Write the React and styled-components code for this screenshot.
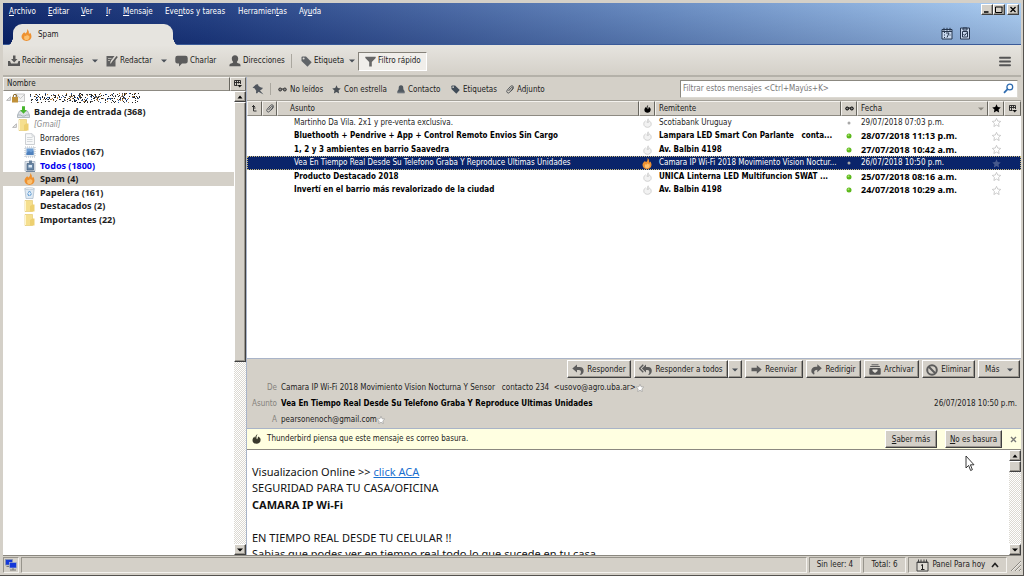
import React from "react";
import styled, { createGlobalStyle, css } from "styled-components";

const ui = '"DejaVu Sans Condensed", "DejaVu Sans", sans-serif';
const uiBold = '"Noto Sans", "DejaVu Sans", sans-serif';
const face = "#d4d0c8";
const navy = "#0a246a";

const Global = createGlobalStyle`
  *, *::before, *::after { box-sizing: border-box; }
  body { margin: 0; background: ${face}; font: 8px/12px ${ui}; color: #1c1c1c; }
  button, input { font: inherit; color: inherit; margin: 0; padding: 0; border: 0; background: none; }
  svg { display: block; flex: none; }
  u { text-underline-offset: 1px; }
`;

const raised = css`
  background: ${face};
  border: 1px solid;
  border-color: #fff #404040 #404040 #fff;
  box-shadow: inset -1px -1px 0 #9a968e;
`;

/* ---------- window frame ---------- */
const Window = styled.div`
  height: 100vh;
  min-height: 400px;
  display: flex;
  flex-direction: column;
  padding: 3px 2px 1px 3px;
  background: ${face};
  border-right: 1px solid #55534f;
  border-bottom: 1px solid #55534f;
`;

const TitleArea = styled.header`
  height: 42px;
  flex: none;
  display: grid;
  grid-template-columns: 1fr auto;
  grid-template-rows: 20px 22px;
  padding-left: 6px;
  background:
    linear-gradient(to bottom, rgba(255,255,255,.06), rgba(0,0,40,.14)),
    linear-gradient(to right, #0a246a 0%, #1c3a80 20%, #3c5c9c 40%, #6388c0 65%, #88addc 85%, #a8ccf2 100%);
  border-bottom: 1px solid #3a5a98;
`;

const MenuBar = styled.nav`
  display: flex;
  align-items: center;
  gap: 12px;
  padding-bottom: 2px;
  color: #fff;
`;
const MenuItem = styled.button`
  color: #fff;
  white-space: nowrap;
  width: ${(p) => p.$w}px;
  text-align: left;
`;

const WindowButtons = styled.div`
  display: flex;
  align-items: flex-start;
  justify-content: flex-end;
  padding: 1px 2px 0 0;
`;
const WindowButton = styled.button`
  ${raised}
  width: 12px;
  height: 11px;
  display: grid;
  place-items: center;
  color: #000;
  & + &:last-child { margin-left: 2px; }
`;

const TabStrip = styled.div`
  display: flex;
  align-items: flex-end;
  padding-left: 4px;
`;
const Tab = styled.button`
  position: relative;
  width: 160px;
  height: 22px;
  display: flex;
  align-items: center;
  gap: 6px;
  padding-left: 8px;
  margin-bottom: -1px;
  border-radius: 9px 9px 0 0;
  background: #e6e4df;
  &::before, &::after {
    content: "";
    position: absolute;
    bottom: 0;
    width: 7px;
    height: 9px;
  }
  &::before { right: 100%; background: radial-gradient(ellipse 7px 9px at 0 0, transparent 96%, #e6e4df 100%); }
  &::after { left: 100%; background: radial-gradient(ellipse 7px 9px at 100% 0, transparent 96%, #e6e4df 100%); }
`;
const TabTools = styled.div`
  display: flex;
  align-items: center;
  gap: 6px;
  padding: 0 50px 2px 0;
`;
const IconButton = styled.button`
  display: grid;
  place-items: center;
`;

/* ---------- main toolbar ---------- */
const Toolbar = styled.div`
  height: 32px;
  flex: none;
  display: flex;
  align-items: center;
  padding: 2px 10px 0 5px;
  background: linear-gradient(#e6e4df, #d4d0c8);
  border-bottom: 2px solid #b4b1a9;
`;
const ToolButton = styled.button`
  width: ${(p) => p.$w}px;
  height: 19px;
  display: flex;
  align-items: center;
  gap: 2px;
  white-space: nowrap;
  ${(p) => p.$pressed && css`
    padding-left: 6px;
    background: #f0eeea;
    border: 1px solid;
    border-color: #85827a #fff #fff #85827a;
  `}
`;
const ArrowButton = styled.button`
  width: ${(p) => p.$w || 22}px;
  height: 19px;
  display: grid;
  place-items: center;
`;
const Divider = styled.span`
  width: 1px;
  height: ${(p) => p.$h || 14}px;
  margin-right: ${(p) => p.$gap}px;
  background: #aaa79f;
`;
const Spacer = styled.span`flex: 1;`;

/* ---------- body split ---------- */
const Body = styled.div`
  flex: 1;
  min-height: 0;
  display: grid;
  grid-template-columns: 243px minmax(0, 1fr);
`;

const FolderPane = styled.aside`
  min-height: 0;
  display: grid;
  grid-template-columns: minmax(0, 1fr) 12px;
  grid-template-rows: 14px minmax(0, 1fr);
`;
const FolderHead = styled.div`
  grid-column: 1 / -1;
  display: flex;
`;
const HeadCell = styled.button`
  ${raised}
  border-color: #f4f2ee #68665f #8d8a82 #f4f2ee;
  box-shadow: none;
  height: 14px;
  flex: ${(p) => (p.$w ? "none" : 1)};
  width: ${(p) => (p.$w ? p.$w + "px" : "auto")};
  padding-left: ${(p) => (p.$w ? 0 : 3)}px;
  text-align: left;
  display: flex;
  align-items: center;
  justify-content: ${(p) => (p.$w ? "center" : "flex-start")};
`;
const Tree = styled.ul`
  margin: 0;
  padding: 0;
  list-style: none;
  background: #fff;
  display: grid;
  grid-auto-rows: 14px 13px;
  align-content: start;
  overflow: hidden;
`;
const Folder = styled.li`
  display: flex;
  align-items: center;
  padding-left: ${(p) => p.$indent}px;
  background: ${(p) => (p.$selected ? face : "none")};
`;
const FolderName = styled.span`
  padding-left: ${(p) => p.$pad || 4}px;
  white-space: nowrap;
  color: ${(p) => p.$color || "#1c1c1c"};
  font-style: ${(p) => (p.$italic ? "italic" : "normal")};
  ${(p) => p.$bold && css`font: bold 9px/12px ${uiBold};`}
`;
const Twisty = styled.span`
  width: 5px;
  margin-right: 1px;
`;

const ScrollTrack = styled.div`
  display: flex;
  flex-direction: column;
  background: repeating-conic-gradient(#fff 0 25%, #dcd9d2 0 50%) 0 0 / 2px 2px;
`;
const ScrollButton = styled.button`
  ${raised}
  flex: none;
  height: 11px;
  width: 12px;
  display: grid;
  place-items: center;
`;
const ScrollThumb = styled.div`
  ${raised}
  width: 12px;
  height: ${(p) => p.$h};
`;

/* ---------- right side ---------- */
const Main = styled.main`
  min-width: 0;
  min-height: 0;
  display: grid;
  grid-template-rows: minmax(0, 10fr) minmax(0, 7fr);
  border-left: 1px solid #a9b4c8;
`;
const ThreadPane = styled.section`
  display: flex;
  flex-direction: column;
  min-height: 0;
  background: #fff;
  overflow: hidden;
`;
const FilterBar = styled.div`
  height: 24px;
  flex: none;
  display: flex;
  align-items: center;
  padding: 0 3px 0 5px;
  background: ${face};
  border-bottom: 1px solid #a3a098;
`;
const FilterButton = styled.button`
  width: ${(p) => p.$w}px;
  height: 17px;
  padding-top: 2px;
  display: flex;
  align-items: center;
  gap: 3px;
  white-space: nowrap;
`;
const SearchBox = styled.label`
  width: 338px;
  height: 18px;
  display: flex;
  align-items: center;
  padding: 0 3px 0 2px;
  background: #fff;
  border: 1px solid;
  border-color: #8b8880 #dcd9d2 #dcd9d2 #8b8880;
`;
const SearchInput = styled.input`
  flex: 1;
  min-width: 0;
  outline: 0;
  &::placeholder { color: #777; opacity: 1; }
`;

const Threads = styled.table`
  width: 100%;
  table-layout: fixed;
  border-collapse: collapse;
  flex: none;
  th { padding: 0; font-weight: normal; background: ${face}; }
  td { padding: 0; height: 13px; line-height: 12px; overflow: hidden; white-space: pre; text-overflow: ellipsis; }
`;
const ThreadHead = styled.button`
  ${raised}
  border-color: #f4f2ee #68665f #8d8a82 #f4f2ee;
  box-shadow: none;
  width: 100%;
  height: 15px;
  display: flex;
  align-items: center;
  justify-content: ${(p) => (p.$center ? "center" : "space-between")};
  padding: 0 ${(p) => (p.$center ? 0 : 3)}px 0 ${(p) => p.$pad || 0}px;
`;
const ThreadRow = styled.tr`
  &:nth-child(even) td { height: 14px; }
  ${(p) => p.$bold && css`
    td { font-weight: bold; color: #000; }
    td.wide { font: bold 9px/12px ${uiBold}; }
  `}
  ${(p) => p.$selected && css`
    background: ${navy};
    outline: 1px dotted #c8b87a;
    outline-offset: -1px;
    color: #fff;
  `}
`;
const SubjectCell = styled.td`&& { padding-left: 17px; }`;
const TextCell = styled.td`&& { padding-left: 4px; }`;
const IconCell = styled.td`
  svg { margin: 0 auto; }
`;

/* ---------- message ---------- */
const MessagePane = styled.section`
  display: flex;
  flex-direction: column;
  min-height: 0;
  background: #fff;
  border-top: 1px solid #a9b4c8;
`;
const MessageHead = styled.div`
  flex: none;
  background: ${face};
  padding: 1px 1px 0 3px;
  border-bottom: 1px solid #a9b4c8;
`;
const Actions = styled.div`
  display: flex;
  justify-content: flex-end;
  gap: 3px;
`;
const ActionButton = styled.button`
  ${raised}
  width: ${(p) => p.$w}px;
  height: 18px;
  padding-top: 1px;
  display: flex;
  align-items: center;
  justify-content: center;
  gap: 3px;
  white-space: nowrap;
`;
const Split = styled.div`display: flex;`;
const Fields = styled.dl`
  margin: 2px 3px 0 0;
  display: grid;
  grid-template-columns: 27px minmax(0, 1fr) auto;
  column-gap: 4px;
  grid-template-rows: 16px 15px 17px;
  align-items: center;
  dt { text-align: right; color: #85827c; }
  dd { margin: 0; display: flex; align-items: center; white-space: pre; }
`;
const SubjectField = styled.dd`font-weight: bold; color: #000;`;
const JunkBar = styled.div`
  flex: none;
  height: 21px;
  display: flex;
  align-items: center;
  padding: 0 4px 0 5px;
  background: #ffffe1;
  border-bottom: 1px solid #8b8880;
`;
const JunkText = styled.span`
  flex: 1;
  padding-left: 6px;
`;
const JunkButton = styled(ActionButton)`margin-right: 8px;`;
const Content = styled.div`
  flex: 1;
  min-height: 0;
  display: grid;
  grid-template-columns: minmax(0, 1fr) 12px;
`;
const Article = styled.article`
  overflow: hidden;
  padding: 14px 0 0 5px;
  font-family: "Noto Sans", sans-serif;
  font-size: 11px;
  line-height: 16px;
  color: #111;
  display: grid;
  grid-auto-rows: 16px 17px;
  align-content: start;
  p { margin: 0; }
  a { color: #1a6fd0; }
`;

/* ---------- status bar ---------- */
const StatusBar = styled.footer`
  flex: none;
  height: 19px;
  display: flex;
  align-items: center;
  gap: 2px;
  border-top: 1px solid #8b8880;
  padding: 1px 0;
`;
const StatusCell = styled.div`
  height: 16px;
  width: ${(p) => (p.$w ? p.$w + "px" : "auto")};
  flex: ${(p) => (p.$w ? "none" : 1)};
  display: flex;
  align-items: center;
  justify-content: center;
  white-space: nowrap;
  border: 1px solid;
  border-color: #97948c #f4f2ee #f4f2ee #97948c;
`;
const StatusButton = styled.button`
  display: flex;
  align-items: center;
  gap: 3px;
`;
const Pointer = styled.svg`
  position: absolute;
  left: 965px;
  top: 455px;
  pointer-events: none;
`;

/* ---------- icons ---------- */
const Caret = ({ c = "#4a5058", up }) => (
  <svg width="6" height="4" viewBox="0 0 6 4"><path d={up ? "M0.5 3.5h5L3 .5z" : "M0 .5h6L3 3.5z"} fill={c} /></svg>
);
const Flame = ({ size = 11 }) => (
  <svg width={size} height={size + 1} viewBox="0 0 12 13">
    <path d="M6.500 0C7.200 2.200 6.500 3.400 5 4.800C4.600 4.600 4 4.200 3.600 3.400C1.500 5 .6 6.500.6 8.200C.6 11 3 13 6 13s5.400-2 5.400-4.800c0-1.700-.5-3-1.500-4.200C9.600 5 9.100 5.300 8.600 5.200C8.900 3 8.200 1.200 6.500 0z" fill="#ee9130" />
    <path d="M6.300 5.500C6.800 7.500 5 8.300 4.300 7C3 8.500 2.800 12 6 12s4-3.500 2.500-5C8 8 7 7 6.300 5.500z" fill="#fbc070" />
  </svg>
);
const JunkMark = ({ c = "#000", size = 9 }) => (
  <svg width={size} height={size + 1} viewBox="0 0 9 10">
    <path d="M5.500 0C5 1.500 4.400 2 4.500 4C4.500 5.500 5.500 5.500 5.600 4.300L6.200 2.500C8 3.500 8.700 4.600 8.600 6C8.500 8.500 6.700 9.800 4.500 9.800S.5 8.500.5 6.200C.5 4.500 1.500 3.600 2.500 2.500C2.500 3.700 3 4 3.300 3.200C3.600 2 4.200.7 5.500 0z" fill={c} />
  </svg>
);
const JunkOutline = () => (
  <svg width="9" height="10" viewBox="0 0 9 10">
    <path d="M5.200.8C4.600 2 4.200 3 4.300 5M2.500 2.800C1 4 .8 5 .8 6.200C.8 8 2.500 9.300 4.500 9.300S8.200 8 8.200 6.200C8.200 4.700 7.500 3.500 6 2.800M5.200.8V5" fill="#f2f2f2" stroke="#d0d0d0" />
  </svg>
);
const Star = ({ size = 9, fill = "#4a5056", stroke = "none" }) => (
  <svg width={size} height={size} viewBox="0 0 10 10">
    <path d="M5 .4L6.400 3.400L9.700 3.800L7.300 6.100L7.900 9.500L5 7.800L2.100 9.500L2.700 6.100L.3 3.800L3.600 3.400z" fill={fill} stroke={stroke} strokeWidth=".8" />
  </svg>
);
const Glasses = ({ c = "#333" }) => (
  <svg width="9" height="5" viewBox="0 0 9 5">
    <circle cx="2.200" cy="2.500" r="1.500" fill="#888" stroke={c} /><circle cx="6.800" cy="2.500" r="1.500" fill="#888" stroke={c} /><path d="M3.500 2h2" stroke={c} />
  </svg>
);
const Tag = ({ size = 11, c = "#606468" }) => (
  <svg width={size} height={size} viewBox="0 0 11 11">
    <path d="M.5 1.500Q.5.500 1.500.5H5L10.700 6.200L6.500 10.700L.5 5z" fill={c} /><circle cx="2.600" cy="2.600" r="1" fill="#e0ded8" />
  </svg>
);
const Clip = () => (
  <svg width="8" height="9" viewBox="0 0 8 9">
    <path d="M2.500 6L5.200 2.800Q6 2 6.500 2.600T6.300 4.200L3.600 7.400Q2.400 8.600 1.300 7.600T1.200 5.200L4.500 1.400Q5.800.2 7 1.200T7 3.800L5 6.200" fill="none" stroke="#45494e" strokeWidth=".9" />
  </svg>
);
const Person = ({ size = 12, c = "#585858" }) => (
  <svg width={size} height={size} viewBox="0 0 12 12">
    <path d="M6 .3c2 0 3.200 1.400 3.200 3.300c0 1.500-.6 2.800-1.400 3.500c.2.900 1 1.200 2.200 1.500c1.200.3 1.600 1.100 1.600 2.700H.4c0-1.600.4-2.400 1.600-2.700c1.200-.3 2-.6 2.200-1.500C3.400 6.400 2.800 5.100 2.800 3.600C2.800 1.700 4 .3 6 .3z" fill={c} />
  </svg>
);
const Contact = () => (
  <svg width="8" height="9" viewBox="0 0 8 9">
    <path d="M4 .3C5.600.3 6.300 1.400 6.300 3c0 1.200.1 1.800 1.300 3V8.300H.4V6C1.600 4.800 1.700 4.200 1.700 3C1.700 1.400 2.400.3 4 .3z" fill="#505860" /><path d="M1 7.300h6" stroke="#8a9098" strokeWidth=".6" />
  </svg>
);
const Inbox = () => (
  <svg width="12" height="12" viewBox="0 0 12 12" fill="#585858">
    <path d="M5 .5h2.500V4H9.500L6.200 7.500L3 4H5z" /><path d="M0 6h2l1 2.500h6.500L10.500 6H12v5H0z" />
  </svg>
);
const Compose = () => (
  <svg width="12" height="12" viewBox="0 0 12 12">
    <path d="M.5 1h8L5 5.500L4 8.500L7 8L9.500 5V11.500H.5z" fill="#606060" /><path d="M2 3.500h3.500M2 5.500h2" stroke="#c8c5be" strokeWidth=".8" /><path d="M5.500 7.500L10.500 1L11.800 2L7 8.500L5 9z" fill="#585858" />
  </svg>
);
const Chat = () => (
  <svg width="13" height="12" viewBox="0 0 13 12"><path d="M2.500.8h8Q12.700.8 12.700 3v3.500Q12.700 8.500 10.500 8.500H7L4 11.500V8.500H2.500Q.3 8.500.3 6.500V3Q.3.800 2.500.8z" fill="#5c5c5c" /></svg>
);
const Funnel = () => (
  <svg width="11" height="11" viewBox="0 0 11 11"><path d="M.3.800H10.700V2L6.800 6V10.500H4.200V6L.3 2z" fill="#666" /></svg>
);
const Hamburger = () => (
  <svg width="12" height="11" viewBox="0 0 12 11"><path d="M1 1.800h10M1 5.500h10M1 9.200h10" stroke="#555" strokeWidth="2" strokeLinecap="round" /></svg>
);
const Pin = () => (
  <svg width="12" height="11" viewBox="0 0 12 11"><path d="M4 .5L6 .3L6.500 2L9 3.500L10.800 3.700L10.300 5L8 6.500L11.500 10.500L6.500 7.800L5 9.500L4 9L4.200 6.800L2.500 4.300L.5 3.700z" fill="#50565e" /></svg>
);
const Magnifier = () => (
  <svg width="11" height="11" viewBox="0 0 11 11" fill="none" stroke="#2f6cb0"><circle cx="6.800" cy="4" r="2.900" strokeWidth="1.300" /><path d="M4.600 6.200L1 9.800" strokeWidth="1.800" /></svg>
);
const Picker = () => (
  <svg width="8" height="8" viewBox="0 0 8 8"><path d="M.5.500h6v3.500M.5.500v5h3M.5 2.500h6M2.500.5v5M4.500.5v3" stroke="#222" fill="none" strokeWidth=".9" /><path d="M3.500 5h4.500L5.700 7.500z" fill="#111" /></svg>
);
const ThreadIcon = () => (
  <svg width="5" height="7" viewBox="0 0 5 7"><path d="M1.500 0v6h3M1.500 3h2M0 1.500h3" stroke="#333" fill="none" /></svg>
);
const Yellow = () => (
  <svg width="12" height="12" viewBox="0 0 12 12">
    <path d="M1 .5h7.500v11H1z" fill="#f5df8e" stroke="#e0c468" strokeWidth=".6" /><path d="M8.500 4.500h2v7h-4.500V6z" fill="#edd070" /><path d="M1.500 1v10" stroke="#fff6cc" />
  </svg>
);
const TrayDown = () => (
  <svg width="13" height="12" viewBox="0 0 13 12">
    <path d="M2.500 5h8L12.500 9v2.500H.5V9z" fill="#dde2e6" stroke="#98a2aa" strokeWidth=".7" /><path d="M1 9h3l1 1h3l1-1h3" stroke="#98a2aa" fill="none" strokeWidth=".7" /><path d="M5 .3h3V4H10L6.500 7.800L3 4H5z" fill="#48b52e" />
  </svg>
);
const Draft = () => (
  <svg width="12" height="12" viewBox="0 0 12 12">
    <path d="M1.500.7h6.500l2.500 2.500v8.300h-9z" fill="#f7f8f9" stroke="#c0c4c8" strokeWidth=".8" /><path d="M8 .7v2.500h2.500M3 4.500h5.500M3 6.500h5.500M3 8.500h5.500" stroke="#ccd0d4" fill="none" strokeWidth=".8" />
  </svg>
);
const Stamp = () => (
  <svg width="12" height="12" viewBox="0 0 12 12">
    <rect x="1" y="1" width="10" height="10" fill="#e8ecf0" stroke="#b4bcc6" strokeDasharray="1 1" /><rect x="2.500" y="2.500" width="7" height="6.500" fill="#6f9fd6" /><path d="M2.500 7l2.500-2l2 1.500l2.500-2v4.500h-7z" fill="#4f80bc" />
  </svg>
);
const AllMail = () => (
  <svg width="12" height="12" viewBox="0 0 12 12">
    <path d="M1 1.500h10v9.500H1z" fill="#dfe5ec" stroke="#a4b0be" strokeWidth=".7" /><path d="M3 3.500h6.500v6.500H3z" fill="#6a88a8" stroke="#46607c" strokeWidth=".7" /><rect x="4.500" y="5" width="3.500" height="2.500" fill="#dbe8f4" /><path d="M5 .5h3v2.500H5z" fill="#66809c" /><path d="M2 11.500h9" stroke="#55708c" strokeWidth=".8" />
  </svg>
);
const Bin = () => (
  <svg width="11" height="12" viewBox="0 0 11 12">
    <path d="M.8 1.500h9.400L9 11.500H2z" fill="#dfeaf4" stroke="#a8b8c8" strokeWidth=".7" /><ellipse cx="5.500" cy="1.700" rx="4.600" ry="1" fill="#f4f8fb" stroke="#a8b8c8" strokeWidth=".6" /><path d="M4 5.500L5.500 4.500L7 5.500M7.300 6.500L6.500 8.500M3.700 6.500L4.500 8.500H5.500" stroke="#4a90d0" fill="none" />
  </svg>
);
const LockMail = () => (
  <svg width="13" height="10" viewBox="0 0 13 10">
    <path d="M3.500 1h9v7.500h-9z" fill="#f2f2f2" stroke="#b4b4b4" strokeWidth=".7" /><path d="M4 1.500l4.500 4L12.500 1.500" stroke="#b4b4b4" fill="none" strokeWidth=".7" /><rect y="4" width="6" height="5.500" fill="#c09038" /><path d="M1.300 4V3Q1.300 1.300 3 1.300T4.700 3V4" stroke="#8a6a2c" fill="none" />
  </svg>
);
const TwistyIcon = () => (
  <svg width="5" height="5" viewBox="0 0 5 5"><path d="M.6 4.400H4.400V.8z" fill="#eee" stroke="#aaa" strokeWidth=".8" /></svg>
);
const BLOTS = (() => {
  const out = [];
  const colors = ["#222", "#222", "#555", "#222", "#2f5fa8", "#b07a3a"];
  let s = 20180;
  for (let x = 0; x < 110; x++) {
    for (let y = 0; y < 10; y++) {
      s = (s * 1103515245 + 12345) % 2147483648;
      const r = s / 2147483648;
      if (r < 0.4 - Math.abs(y - 4.5) * 0.055) out.push([x, y, colors[Math.floor(r * 997) % 6]]);
    }
  }
  return out;
})();
const Redacted = () => (
  <svg width="110" height="10" viewBox="0 0 110 10" shapeRendering="crispEdges" role="img" aria-label="Cuenta">
    {BLOTS.map(([x, y, c]) => <rect key={x + "-" + y} x={x} y={y} width="1" height="1" fill={c} />)}
  </svg>
);
const Reply = () => (
  <svg width="12" height="11" viewBox="0 0 12 11"><path d="M.3 4.500L5 .5V3H7.500Q11.700 3 11.700 7Q11.700 9.500 9.500 10.800H7.500Q9 9.500 9 8Q9 6 7 6H5V8.500z" fill="#5c5c5c" /></svg>
);
const ReplyAll = () => (
  <svg width="13" height="11" viewBox="0 0 13 11"><path d="M4.300.8L.6 4.500L4.300 8.200" fill="none" stroke="#5c5c5c" strokeWidth="1.400" /><path d="M2.800 4.500L7 .5V3H9Q12.800 3 12.800 7Q12.800 9.500 10.800 10.800H9Q10.400 9.500 10.400 8Q10.400 6 8.500 6H7V8.500z" fill="#5c5c5c" /></svg>
);
const Forward = () => (
  <svg width="11" height="9" viewBox="0 0 11 9"><path d="M.5 2.800H5.800V.3L10.700 4.500L5.800 8.700V6.200H.5z" fill="#5c5c5c" /></svg>
);
const Redirect = () => (
  <svg width="11" height="11" viewBox="0 0 11 11"><path d="M10.800 4.200L6.300.3V2.800H5Q.3 3 .3 7Q.3 8.500 1.500 9.500L3 10.800L3.500 9.500Q3 8.500 3.300 7.300Q3.700 5.800 6.300 5.800V8.200z" fill="#5c5c5c" /></svg>
);
const Archive = () => (
  <svg width="12" height="11" viewBox="0 0 12 11"><path d="M2.500.8h7M1.200 2.500h9.600" stroke="#5c5c5c" /><rect x=".3" y="4" width="11.400" height="6.800" rx="1" fill="#555" /><path d="M3.500 5.500h5V7L6 9L3.500 7z" fill="#e4e1da" /></svg>
);
const Forbid = () => (
  <svg width="12" height="12" viewBox="0 0 12 12" fill="none" stroke="#5c5c5c" strokeWidth="2"><circle cx="6" cy="6" r="4.800" /><path d="M2.800 2.800L9.200 9.200" /></svg>
);
const CalTab = () => (
  <svg width="12" height="13" viewBox="0 0 12 13"><path d="M1 2.500h10v9.500H1z" fill="#c8d8ee" stroke="#26364e" /><path d="M3 .8v3M6 .8v3M9 .8v3M1 4.500h10" stroke="#26364e" /><path d="M3 5.500h1M5 6h3L6 10.500M3 8h1M3 10.500h1M8.500 8h1" stroke="#26364e" fill="none" /></svg>
);
const TaskTab = () => (
  <svg width="12" height="13" viewBox="0 0 12 13"><path d="M1.500 1h9v11h-9z" fill="#c8d8ee" stroke="#26364e" /><path d="M4 1h4v2H4zM3.500 4.500h5v5.500h-5z" stroke="#26364e" fill="none" /><path d="M4.500 7l1.200 1.500L8 5.500" stroke="#26364e" fill="none" /></svg>
);
const CalSmall = () => (
  <svg width="13" height="13" viewBox="0 0 13 13"><path d="M1 3h11v9H1z" fill="#dedbd4" stroke="#444" /><path d="M2.500 .5v2.500M5 .5v2.500M8 .5v2.500M10.500 .5v2.500M1 3.500h11" stroke="#444" /><path d="M5 6.500l1.500-1V10.500M5 10.500h3.500" stroke="#222" fill="none" /></svg>
);
const Monitors = () => (
  <svg width="12" height="12" viewBox="0 0 12 12"><rect x=".5" y=".5" width="7" height="5.500" fill="#1438d8" stroke="#8894b0" strokeWidth=".7" /><path d="M1.500 7.500h4" stroke="#777" /><rect x="4.500" y="3.500" width="7" height="5.500" fill="#1438d8" stroke="#a8b4cc" strokeWidth=".7" /><path d="M5 11h6M8 9v2" stroke="#777" /></svg>
);
const Grip = () => (
  <svg width="12" height="12" viewBox="0 0 12 12"><path d="M2 12L12 2M6 12L12 6M10 12L12 10" stroke="#8b8880" /><path d="M3 12L12 3M7 12L12 7M11 12L12 11" stroke="#fff" strokeWidth=".6" /></svg>
);
const Dot = ({ on }) => (
  <svg width="6" height="6" viewBox="0 0 6 6"><circle cx="3" cy="3" r={on ? 2.500 : 1.500} fill={on ? "#5cb81c" : "#a8a8a8"} />{on && <circle cx="2.500" cy="2.300" r="1" fill="#a4e068" />}</svg>
);

/* ---------- data ---------- */
const MENUS = [
  ["", "A", "rchivo", 27], ["", "E", "ditar", 21], ["", "V", "er", 13], ["", "I", "r", 5],
  ["", "M", "ensaje", 30], ["Eve", "n", "tos y tareas", 61], ["Herramien", "t", "as", 49], ["Ay", "u", "da", 24],
];
const FOLDERS = [
  { name: "Bandeja de entrada (368)", icon: <TrayDown />, indent: 14, bold: true },
  { name: "[Gmail]", icon: <Yellow />, indent: 9, italic: true, twisty: true, color: "#888" },
  { name: "Borradores", icon: <Draft />, indent: 21 },
  { name: "Enviados (167)", icon: <Stamp />, indent: 21, bold: true },
  { name: "Todos (1800)", icon: <AllMail />, indent: 21, bold: true, color: "#0000f0" },
  { name: "Spam (4)", icon: <Flame />, indent: 21, bold: true, selected: true, pad: 5 },
  { name: "Papelera (161)", icon: <Bin />, indent: 21, bold: true, pad: 5 },
  { name: "Destacados (2)", icon: <Yellow />, indent: 21, bold: true },
  { name: "Importantes (22)", icon: <Yellow />, indent: 21, bold: true },
];
const MAILS = [
  ["Martinho Da Vila. 2x1 y pre-venta exclusiva.", "Scotiabank Uruguay", "29/07/2018 07:03 p.m.", false],
  ["Bluethooth + Pendrive + App + Control Remoto Envios Sin Cargo", "Lampara LED Smart Con Parlante   conta...", "28/07/2018 11:13 p.m.", true],
  ["1, 2 y 3 ambientes en barrio Saavedra", "Av. Balbin 4198", "27/07/2018 10:42 a.m.", true],
  ["Vea En Tiempo Real Desde Su Telefono Graba Y Reproduce Ultimas Unidades", "Camara IP Wi-Fi 2018 Movimiento Vision Noctur...", "26/07/2018 10:50 p.m.", false],
  ["Producto Destacado 2018", "UNICA Linterna LED Multifuncion SWAT ...", "25/07/2018 08:16 a.m.", true],
  ["Invertí en el barrio más revalorizado de la ciudad", "Av. Balbin 4198", "24/07/2018 10:29 a.m.", true],
];

function Scrollbar({ thumb }) {
  return (
    <ScrollTrack>
      <ScrollButton aria-label="Subir"><Caret up c="#000" /></ScrollButton>
      <ScrollThumb $h={thumb} />
      <Spacer />
      <ScrollButton aria-label="Bajar"><Caret c="#000" /></ScrollButton>
    </ScrollTrack>
  );
}

export default function App() {
  return (
    <>
      <Global />
      <Window>
        <TitleArea>
          <MenuBar>
            {MENUS.map(([a, k, b, w]) => <MenuItem key={k + b} $w={w}>{a}<u>{k}</u>{b}</MenuItem>)}
          </MenuBar>
          <WindowButtons>
            <WindowButton aria-label="Minimizar"><svg width="8" height="7" viewBox="0 0 8 7"><path d="M1 6h4.500" stroke="#000" strokeWidth="1.500" /></svg></WindowButton>
            <WindowButton aria-label="Maximizar"><svg width="8" height="7" viewBox="0 0 8 7"><path d="M.5 1h7M.5 6.500h6.500M.5 1v5.500M7 1v5.500" stroke="#000" fill="none" /></svg></WindowButton>
            <WindowButton aria-label="Cerrar"><svg width="8" height="7" viewBox="0 0 8 7"><path d="M1.500 1L6.500 6M6.500 1L1.500 6" stroke="#000" strokeWidth="1.300" /></svg></WindowButton>
          </WindowButtons>
          <TabStrip>
            <Tab><Flame />Spam</Tab>
          </TabStrip>
          <TabTools>
            <IconButton aria-label="Calendario"><CalTab /></IconButton>
            <IconButton aria-label="Tareas"><TaskTab /></IconButton>
          </TabTools>
        </TitleArea>

        <Toolbar>
          <ToolButton $w={76}><Inbox />Recibir mensajes</ToolButton>
          <ArrowButton aria-label="Opciones de recepción"><Caret /></ArrowButton>
          <ToolButton $w={47}><Compose />Redactar</ToolButton>
          <ArrowButton aria-label="Opciones de redacción"><Caret /></ArrowButton>
          <ToolButton $w={54}><Chat />Charlar</ToolButton>
          <ToolButton $w={62}><Person />Direcciones</ToolButton>
          <Divider $gap={9} />
          <ToolButton $w={44}><Tag />Etiqueta</ToolButton>
          <ArrowButton aria-label="Elegir etiqueta" $w={13}><Caret /></ArrowButton>
          <ToolButton $w={69} $pressed><Funnel />Filtro rápido</ToolButton>
          <Spacer />
          <IconButton aria-label="Menú"><Hamburger /></IconButton>
        </Toolbar>

        <Body>
          <FolderPane>
            <FolderHead>
              <HeadCell>Nombre</HeadCell>
              <HeadCell $w={16} aria-label="Columnas"><Picker /></HeadCell>
            </FolderHead>
            <Tree>
              <Folder $indent={3}><Twisty><TwistyIcon /></Twisty><LockMail /><FolderName $pad={5}><Redacted /></FolderName></Folder>
              {FOLDERS.map((f) => (
                <Folder key={f.name} $indent={f.indent} $selected={f.selected}>
                  {f.twisty && <Twisty><TwistyIcon /></Twisty>}
                  {f.icon}
                  <FolderName $bold={f.bold} $italic={f.italic} $color={f.color} $pad={f.pad}>{f.name}</FolderName>
                </Folder>
              ))}
            </Tree>
            <Scrollbar thumb="56%" />
          </FolderPane>

          <Main>
            <ThreadPane>
              <FilterBar>
                <FilterButton $w={18} aria-label="Mantener filtro"><Pin /></FilterButton>
                <Divider $h={12} $gap={7} />
                <FilterButton $w={54}><Glasses />No leídos</FilterButton>
                <FilterButton $w={65}><Star />Con estrella</FilterButton>
                <FilterButton $w={54}><Contact />Contacto</FilterButton>
                <FilterButton $w={55}><Tag size={9} c="#404c58" />Etiquetas</FilterButton>
                <FilterButton $w={50}><Clip />Adjunto</FilterButton>
                <Spacer />
                <SearchBox>
                  <SearchInput type="search" aria-label="Filtrar" placeholder="Filtrar estos mensajes <Ctrl+Mayús+K>" />
                  <Magnifier />
                </SearchBox>
              </FilterBar>
              <Threads>
                <colgroup>
                  <col width="15" /><col width="15" /><col /><col width="16" /><col width="186" />
                  <col width="16" /><col width="131" /><col width="16" /><col width="17" />
                </colgroup>
                <thead>
                  <tr>
                    <th><ThreadHead $center aria-label="Hilos"><ThreadIcon /></ThreadHead></th>
                    <th><ThreadHead $center aria-label="Adjuntos"><Clip /></ThreadHead></th>
                    <th><ThreadHead $pad={12}>Asunto</ThreadHead></th>
                    <th><ThreadHead $center aria-label="Basura"><JunkMark size={7} /></ThreadHead></th>
                    <th><ThreadHead $pad={3}>Remitente</ThreadHead></th>
                    <th><ThreadHead $center aria-label="Leído"><Glasses c="#000" /></ThreadHead></th>
                    <th><ThreadHead $pad={3}>Fecha<Caret c="#8b8880" /></ThreadHead></th>
                    <th><ThreadHead $center aria-label="Estrella"><Star fill="#000" /></ThreadHead></th>
                    <th><ThreadHead $center aria-label="Columnas"><Picker /></ThreadHead></th>
                  </tr>
                </thead>
                <tbody>
                  {MAILS.map(([subject, from, date, bold], i) => {
                    const selected = i === 3;
                    return (
                      <ThreadRow key={date} $bold={bold} $selected={selected}>
                        <td /><td />
                        <SubjectCell>{subject}</SubjectCell>
                        <IconCell>{selected ? <Flame size={10} /> : <JunkOutline />}</IconCell>
                        <TextCell>{from}</TextCell>
                        <IconCell><Dot on={bold} /></IconCell>
                        <TextCell className="wide">{date}</TextCell>
                        <IconCell>{selected ? <Star fill="#46598c" /> : <Star fill="#fff" stroke="#bbb" />}</IconCell>
                        <td />
                      </ThreadRow>
                    );
                  })}
                </tbody>
              </Threads>
            </ThreadPane>

            <MessagePane>
              <MessageHead>
                <Actions>
                  <ActionButton $w={64}><Reply />Responder</ActionButton>
                  <Split>
                    <ActionButton $w={94}><ReplyAll />Responder a todos</ActionButton>
                    <ActionButton $w={14} aria-label="Más respuestas"><Caret /></ActionButton>
                  </Split>
                  <ActionButton $w={58}><Forward />Reenviar</ActionButton>
                  <ActionButton $w={55}><Redirect />Redirigir</ActionButton>
                  <ActionButton $w={55}><Archive />Archivar</ActionButton>
                  <ActionButton $w={53}><Forbid />Eliminar</ActionButton>
                  <ActionButton $w={42}>Más&nbsp;&nbsp;<Caret /></ActionButton>
                </Actions>
                <Fields>
                  <dt>De</dt>
                  <dd>{"Camara IP Wi-Fi 2018 Movimiento Vision Nocturna Y Sensor   contacto 234  <usovo@agro.uba.ar>"}<Star size={8} fill="#fff" stroke="#999" /></dd>
                  <dd />
                  <dt>Asunto</dt>
                  <SubjectField>Vea En Tiempo Real Desde Su Telefono Graba Y Reproduce Ultimas Unidades</SubjectField>
                  <dd>26/07/2018 10:50 p.m.</dd>
                  <dt>A</dt>
                  <dd>pearsonenoch@gmail.com<Star size={8} fill="#fff" stroke="#999" /></dd>
                </Fields>
              </MessageHead>
              <JunkBar>
                <JunkMark size={9} c="#3a3a2c" />
                <JunkText>Thunderbird piensa que este mensaje es correo basura.</JunkText>
                <JunkButton $w={52}><span><u>S</u>aber más</span></JunkButton>
                <JunkButton $w={57}><span><u>N</u>o es basura</span></JunkButton>
                <IconButton aria-label="Cerrar aviso"><svg width="7" height="7" viewBox="0 0 7 7"><path d="M1 1L6 6M6 1L1 6" stroke="#777" strokeWidth="1.400" /></svg></IconButton>
              </JunkBar>
              <Content>
                <Article>
                  <p>Visualizacion Online &gt;&gt; <a href="#ver">click ACA</a></p>
                  <p>SEGURIDAD PARA TU CASA/OFICINA</p>
                  <p><b>CAMARA IP Wi-Fi</b></p>
                  <p />
                  <p>EN TIEMPO REAL DESDE TU CELULAR !!</p>
                  <p>Sabias que podes ver en tiempo real todo lo que sucede en tu casa</p>
                </Article>
                <Scrollbar thumb="11px" />
              </Content>
            </MessagePane>
          </Main>
        </Body>

        <StatusBar>
          <StatusCell $w={16}><Monitors /></StatusCell>
          <StatusCell />
          <StatusCell $w={52}>Sin leer: 4</StatusCell>
          <StatusCell $w={43}>Total: 6</StatusCell>
          <StatusCell $w={99}>
            <StatusButton><CalSmall />Panel Para hoy&nbsp;<svg width="8" height="6" viewBox="0 0 8 6"><path d="M1 5L4 1.500L7 5" stroke="#222" strokeWidth="1.600" fill="none" /></svg></StatusButton>
          </StatusCell>
          <Grip />
        </StatusBar>
      </Window>
      <Pointer width="10" height="17" viewBox="0 0 10 17">
        <path d="M1 1V13L3.600 10.400L5.600 15.500L7.400 14.700L5.400 9.800H9z" fill="#fff" stroke="#222" strokeWidth=".9" />
      </Pointer>
    </>
  );
}
